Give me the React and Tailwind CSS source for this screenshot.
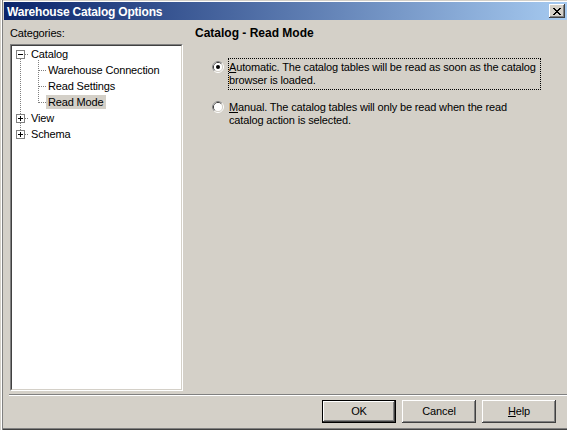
import React from "react";

const Radio = ({ checked }) => (
  <svg width="12" height="12" viewBox="0 0 12 12" className="shrink-0 mt-[3px]">
    <circle cx="6" cy="6" r="5.5" fill="none" stroke="#ffffff" />
    <path d="M2.11 9.89A5.5 5.5 0 0 1 9.89 2.11" fill="none" stroke="#808080" />
    <circle cx="6" cy="6" r="4.5" fill="none" stroke="#d4d0c8" />
    <path d="M2.82 9.18A4.5 4.5 0 0 1 9.18 2.82" fill="none" stroke="#404040" />
    <circle cx="6" cy="6" r="4" fill="#ffffff" />
    {checked && <circle cx="6" cy="6" r="2" fill="#000000" />}
  </svg>
);

const ExpandBox = ({ open }) => (
  <svg width="9" height="9" viewBox="0 0 9 9" className="shrink-0" shapeRendering="crispEdges">
    <rect x="0.5" y="0.5" width="8" height="8" fill="#ffffff" stroke="#808080" />
    <path d="M2 4.5h5" stroke="#000000" />
    {!open && <path d="M4.5 2v5" stroke="#000000" />}
  </svg>
);

const Button = ({ children, isDefault }) => (
  <div className={`w-[74px] h-[23px] ${isDefault ? "border border-black" : ""}`}>
    <div className="w-full h-full flex items-center justify-center bg-[#d4d0c8] shadow-[inset_-1px_-1px_0_#404040,inset_1px_1px_0_#ffffff,inset_-2px_-2px_0_#808080,inset_2px_2px_0_#d4d0c8]">
      {children}
    </div>
  </div>
);

const TreeLines = () => (
  <svg className="absolute inset-0 pointer-events-none" width="100%" height="100%" shapeRendering="crispEdges">
    <g stroke="#808080" strokeDasharray="1 1" fill="none">
      <path d="M8.5 13V84" />
      <path d="M13 8.5H17" />
      <path d="M13 72.5H17" />
      <path d="M13 88.5H17" />
      <path d="M26.5 14V57" />
      <path d="M27 24.5H34" />
      <path d="M27 40.5H34" />
      <path d="M27 56.5H34" />
    </g>
  </svg>
);

const RootRow = ({ label, open }) => (
  <div className="h-[16px] flex items-center pl-[4px] relative">
    <ExpandBox open={open} />
    <span className="ml-[4px] px-[2px] h-[14px] leading-[14px] whitespace-nowrap">{label}</span>
  </div>
);

const ChildRow = ({ label, selected }) => (
  <div className="h-[16px] flex items-center pl-[34px] relative">
    <span className={`px-[2px] h-[14px] leading-[14px] whitespace-nowrap ${selected ? "bg-[#d4d0c8]" : ""}`}>
      {label}
    </span>
  </div>
);

export default function App() {
  return (
    <div className="w-[567px] h-[430px] overflow-hidden bg-[#d4d0c8] text-black text-[11px] tracking-[-0.15px] font-['Liberation_Sans',Arial,sans-serif] flex flex-col pt-[2px] pl-[4px] shadow-[inset_1px_0_0_#d4d0c8,inset_2px_0_0_#ffffff,inset_3px_0_0_#808080,inset_0_-1px_0_#404040,inset_0_-2px_0_#808080,inset_0_1px_0_#d4d0c8,inset_0_2px_0_#ffffff]">
      {/* Title bar */}
      <div className="h-[18px] flex items-center justify-between pl-[3px] pr-[2px] bg-[linear-gradient(to_right,#0a246a,#a6caf0)]">
        <span className="text-white font-bold text-[12px] tracking-[-0.2px] leading-[18px] pt-[1px] whitespace-nowrap">
          Warehouse Catalog Options
        </span>
        <div className="w-[16px] h-[14px] flex items-center justify-center bg-[#d4d0c8] shadow-[inset_-1px_-1px_0_#404040,inset_1px_1px_0_#ffffff,inset_-2px_-2px_0_#808080]">
          <svg width="8" height="7" viewBox="0 0 8 7" shapeRendering="crispEdges">
            <path d="M0 0h2v1h1v1h2v-1h1v-1h2v1h-1v1h-1v1h-1v1h1v1h1v1h1v1h-2v-1h-1v-1h-2v1h-1v1h-2v-1h1v-1h1v-1h1v-1h-1v-1h-1v-1h-1z" fill="#000000" />
          </svg>
        </div>
      </div>

      {/* Body */}
      <div className="flex pl-[6px]">
        {/* Categories */}
        <div className="w-[173px] flex flex-col">
          <div className="mt-[7px] h-[13px] leading-[13px]">Categories:</div>
          <div className="mt-[4px] h-[347px] border border-t-[#808080] border-l-[#808080] border-b-white border-r-white">
            <div className="w-full h-full border border-t-[#404040] border-l-[#404040] border-b-[#d4d0c8] border-r-[#d4d0c8] bg-white relative">
              <TreeLines />
              <RootRow label="Catalog" open />
              <ChildRow label="Warehouse Connection" />
              <ChildRow label="Read Settings" />
              <ChildRow label="Read Mode" selected />
              <RootRow label="View" />
              <RootRow label="Schema" />
            </div>
          </div>
        </div>

        {/* Options page */}
        <div className="ml-[12px] flex flex-col">
          <div className="mt-[6px] h-[14px] leading-[14px] text-[12px] font-bold tracking-[0px] whitespace-nowrap">Catalog - Read Mode</div>

          <div className="mt-[18px] flex items-start pl-[17px] gap-[4px]">
            <Radio checked />
            <div className="w-[313px] border border-dotted border-black py-[2px] leading-[13px] whitespace-nowrap">
              <span className="underline">A</span>utomatic. The catalog tables will be read as soon as the catalog
              <br />
              browser is loaded.
            </div>
          </div>

          <div className="mt-[8px] flex items-start pl-[17px] gap-[4px]">
            <Radio />
            <div className="w-[313px] border border-transparent py-[2px] leading-[13px] whitespace-nowrap">
              <span className="underline">M</span>anual. The catalog tables will only be read when the read
              <br />
              catalog action is selected.
            </div>
          </div>
        </div>
      </div>

      {/* Separator */}
      <div className="mt-[3px] ml-[5px] h-[2px] border-t border-t-[#808080] border-b border-b-white" />

      {/* Buttons */}
      <div className="mt-[4px] flex justify-end gap-[6px] pr-[11px]">
        <Button isDefault>OK</Button>
        <Button>Cancel</Button>
        <Button>
          <span>
            <span className="underline">H</span>elp
          </span>
        </Button>
      </div>
    </div>
  );
}
